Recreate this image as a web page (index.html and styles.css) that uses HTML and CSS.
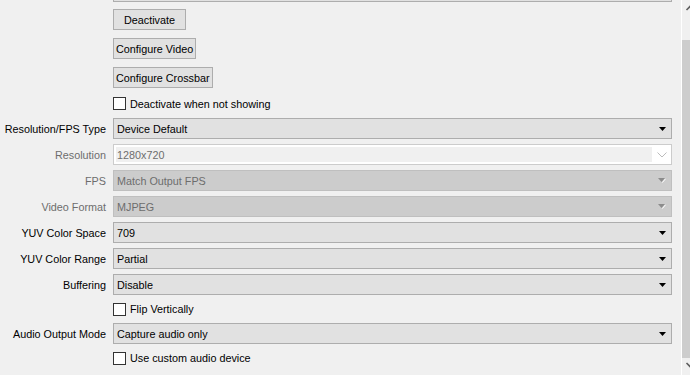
FILE: index.html
```html
<!DOCTYPE html>
<html lang="en">
<head>
    <meta charset="UTF-8">
    <title>Video Capture Device Properties</title>
    <link rel="stylesheet" href="styles.css">
</head>
<body>
    <div class="window">
        <div class="form">
            <!-- bottom edge of the device list above -->
            <div></div>
            <div class="edge"></div>

            <div></div>
            <div class="btn-cell"><span class="btn btn-wide">Deactivate</span></div>

            <div></div>
            <div class="btn-cell"><span class="btn">Configure Video</span></div>

            <div></div>
            <div class="btn-cell"><span class="btn">Configure Crossbar</span></div>

            <div></div>
            <label class="check-row check-first"><span class="box"></span>Deactivate when not showing</label>

            <div class="label">Resolution/FPS Type</div>
            <div class="combo">Device Default<svg class="arrow" width="7" height="4" viewBox="0 0 7 4"><polygon points="0,0 7,0 3.5,4" fill="#000"/></svg></div>

            <div class="label disabled">Resolution</div>
            <div class="combo-edit">
                <div class="field">1280x720</div>
                <div class="drop"><svg width="10" height="6" viewBox="0 0 10 6"><polyline points="0.5,0.5 5,5 9.5,0.5" fill="none" stroke="#bcbcbc" stroke-width="1"/></svg></div>
            </div>

            <div class="label disabled">FPS</div>
            <div class="combo combo-off">Match Output FPS<svg class="arrow" width="8" height="5" viewBox="0 0 8 5"><polygon points="0,0 7,0 3.5,4" fill="#8c8c8c"/><line x1="7.5" y1="0.8" x2="4.3" y2="4.6" stroke="#fff" stroke-width="1"/></svg></div>

            <div class="label disabled">Video Format</div>
            <div class="combo combo-off">MJPEG<svg class="arrow" width="8" height="5" viewBox="0 0 8 5"><polygon points="0,0 7,0 3.5,4" fill="#8c8c8c"/><line x1="7.5" y1="0.8" x2="4.3" y2="4.6" stroke="#fff" stroke-width="1"/></svg></div>

            <div class="label">YUV Color Space</div>
            <div class="combo">709<svg class="arrow" width="7" height="4" viewBox="0 0 7 4"><polygon points="0,0 7,0 3.5,4" fill="#000"/></svg></div>

            <div class="label">YUV Color Range</div>
            <div class="combo">Partial<svg class="arrow" width="7" height="4" viewBox="0 0 7 4"><polygon points="0,0 7,0 3.5,4" fill="#000"/></svg></div>

            <div class="label">Buffering</div>
            <div class="combo">Disable<svg class="arrow" width="7" height="4" viewBox="0 0 7 4"><polygon points="0,0 7,0 3.5,4" fill="#000"/></svg></div>

            <div></div>
            <label class="check-row"><span class="box"></span>Flip Vertically</label>

            <div class="label">Audio Output Mode</div>
            <div class="combo">Capture audio only<svg class="arrow" width="7" height="4" viewBox="0 0 7 4"><polygon points="0,0 7,0 3.5,4" fill="#000"/></svg></div>

            <div></div>
            <label class="check-row"><span class="box"></span>Use custom audio device</label>
        </div>

        <div class="scrollbar">
            <div class="sb-btn"><svg width="17" height="17" viewBox="0 0 17 17"><polyline points="4.5,10 8.5,6 12.5,10" fill="none" stroke="#606060" stroke-width="1.6"/></svg></div>
            <div class="sb-track"><div class="sb-thumb"></div></div>
            <div class="sb-btn"><svg width="17" height="17" viewBox="0 0 17 17"><polyline points="4.5,5 8.5,9 12.5,5" fill="none" stroke="#606060" stroke-width="1.6"/></svg></div>
        </div>
    </div>
</body>
</html>
```

FILE: styles.css
```css
body {
    margin: 0;
    background-color: #f0f0f0;
    font-family: "Liberation Sans", Arial, sans-serif;
    font-size: 10.8px;
    color: #000;
    overflow: hidden;
    height: 375px;
}

.window {
    display: flex;
    height: 375px;
}

.form {
    width: 681px;
    flex-shrink: 0;
    display: grid;
    grid-template-columns: 106px 559px;
    column-gap: 7px;
    row-gap: 5px;
    align-items: center;
    align-content: start;
}

.label {
    text-align: right;
    white-space: nowrap;
}

.disabled {
    color: #6d6d6d;
}

.edge {
    height: 2px;
    box-sizing: border-box;
    border: 1px solid #adadad;
    border-top: none;
    background: #e1e1e1;
}

.btn-cell {
    height: 24px;
}

.btn {
    margin-top: 2px;
    height: 21px;
    box-sizing: border-box;
    display: inline-flex;
    align-items: center;
    justify-content: center;
    padding: 0 2px;
    border: 1px solid #adadad;
    background: #e1e1e1;
}

.btn-wide {
    width: 73px;
}

.check-row {
    height: 18px;
    display: flex;
    align-items: center;
    gap: 4px;
}

.check-first {
    height: 19px;
}

.box {
    width: 13px;
    height: 13px;
    box-sizing: border-box;
    border: 1px solid #333;
    background: #fff;
}

.combo {
    height: 21px;
    box-sizing: border-box;
    border: 1px solid #adadad;
    background: #e1e1e1;
    display: flex;
    align-items: center;
    padding-left: 3px;
}

.combo .arrow {
    margin-left: auto;
    margin-right: 5px;
}

.combo-off {
    background: #cccccc;
    border-color: #bfbfbf;
    color: #6d6d6d;
}

.combo-edit {
    height: 21px;
    box-sizing: border-box;
    border: 1px solid #cccccc;
    background: #fff;
    display: flex;
    padding: 2px 0 2px 2px;
}

.combo-edit .field {
    flex: 1;
    background: #f0f0f0;
    color: #6d6d6d;
    display: flex;
    align-items: center;
    padding-left: 1px;
}

.combo-edit .drop {
    width: 19px;
    display: flex;
    align-items: center;
    justify-content: center;
}

.scrollbar {
    width: 17px;
    flex-shrink: 0;
    display: flex;
    flex-direction: column;
    border-left: 1px solid #fff;
    background: #f0f0f0;
}

.sb-btn {
    height: 17px;
}

.sb-btn svg {
    display: block;
}

.sb-track {
    flex: 1;
    display: flex;
    flex-direction: column;
    justify-content: flex-end;
}

.sb-thumb {
    height: 318px;
    background: #cdcdcd;
}
```
